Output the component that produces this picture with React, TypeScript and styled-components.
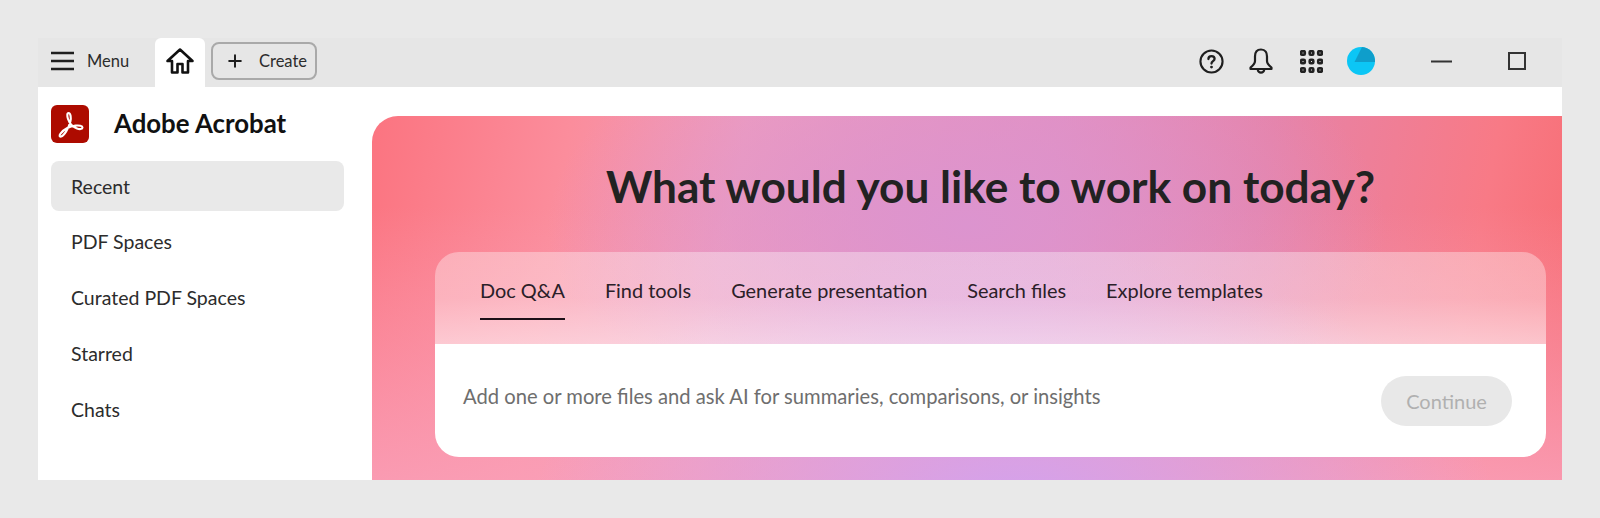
import React from "react";
import styled, { createGlobalStyle } from "styled-components";
import { Plus } from "lucide-react";

const GlobalStyle = createGlobalStyle`
  html, body {
    margin: 0;
    height: 518px;
    overflow: hidden;
    background: #e9e9e9;
    font-family: Lato, "Open Sans", "Liberation Sans", sans-serif;
    color: #222;
  }
  * { box-sizing: border-box; }
`;

const Page = styled.div`
  padding: 38px;
  height: 518px;
`;

const Window = styled.div`
  height: 442px;
  display: flex;
  flex-direction: column;
  background: #fff;
  overflow: hidden;
`;

const TopBar = styled.header`
  height: 49px;
  flex: none;
  background: #e6e6e6;
  display: flex;
  align-items: center;
  padding: 0 0 3px 13px;
`;

const MenuButton = styled.div`
  display: flex;
  align-items: center;
  gap: 13px;
  width: 104px;
  font-size: 16.5px;
  color: #2c2c2c;
`;

const HomeTab = styled.div`
  width: 50px;
  height: 49px;
  margin-bottom: -3px;
  padding-bottom: 3px;
  background: #fff;
  border-radius: 6px 6px 0 0;
  display: flex;
  align-items: center;
  justify-content: center;
`;

const CreateButton = styled.div`
  margin-left: 6px;
  width: 106px;
  height: 38px;
  border: 2px solid #a9a9a9;
  border-radius: 8px;
  display: flex;
  align-items: center;
  gap: 14px;
  padding-left: 12px;
  font-size: 16.5px;
  color: #2c2c2c;
`;

const TopActions = styled.div`
  margin-left: auto;
  display: flex;
  align-items: center;
  padding-right: 25px;
`;

const ActionSlot = styled.div<{ $width: number }>`
  width: ${(p) => p.$width}px;
  display: flex;
  justify-content: center;
  align-items: center;
`;

const Body = styled.div`
  flex: 1;
  display: flex;
  min-height: 0;
`;

const Sidebar = styled.aside`
  width: 334px;
  flex: none;
  padding: 18px 28px 0 13px;
`;

const Brand = styled.div`
  display: flex;
  align-items: center;
  gap: 25px;
  height: 38px;
  margin-bottom: 18px;
`;

const BrandName = styled.div`
  font-size: 25.8px;
  font-weight: 700;
  color: #111;
  padding-bottom: 3px;
`;

const NavItem = styled.div<{ $active?: boolean }>`
  height: 50px;
  margin-bottom: 5.75px;
  border-radius: 8px;
  padding-left: 20px;
  display: flex;
  align-items: center;
  font-size: 19.5px;
  color: #2c2c2c;
  background: ${(p) => (p.$active ? "#e9e9e9" : "transparent")};
`;

const Hero = styled.main`
  flex: 1;
  margin-top: 29px;
  border-top-left-radius: 26px;
  padding: 0 16px 0 63px;
  background:
    radial-gradient(ellipse 480px 260px at 54% 108%, #d2a2ee 0%, rgba(210, 162, 238, 0) 100%),
    radial-gradient(ellipse 420px 220px at 50% 30%, #dc94cf 0%, rgba(220, 148, 207, 0) 100%),
    linear-gradient(180deg, rgba(250, 160, 185, 0) 25%, rgba(250, 160, 185, 0.85) 100%),
    linear-gradient(100deg, #fb7480 0%, #fb8d9c 16%, #ee9cbe 30%, #e38fbf 55%, #e683a8 72%, #f87a86 90%, #f76c72 100%);
  display: flex;
  flex-direction: column;
`;

const Title = styled.h1`
  margin: 0;
  height: 136px;
  padding-top: 40px;
  text-align: center;
  font-size: 44.2px;
  line-height: 60px;
  font-weight: 700;
  color: #222;
`;

const Card = styled.section`
  height: 205px;
  border-radius: 24px;
  overflow: hidden;
  display: flex;
  flex-direction: column;
`;

const TabRow = styled.div`
  height: 92px;
  flex: none;
  padding: 24px 0 0 45px;
  display: flex;
  gap: 40px;
  background: linear-gradient(180deg, rgba(255, 255, 255, 0.35) 0%, rgba(255, 255, 255, 0.35) 50%, rgba(255, 255, 255, 0.52) 100%);
`;

const Tab = styled.div<{ $active?: boolean }>`
  height: 44px;
  font-size: 19.9px;
  line-height: 28px;
  color: #2a2028;
  border-bottom: 2px solid ${(p) => (p.$active ? "#1d1018" : "transparent")};
`;

const InputRow = styled.div`
  flex: 1;
  background: #fff;
  display: flex;
  align-items: center;
  justify-content: space-between;
  padding: 0 34px 0 28px;
`;

const Prompt = styled.div`
  font-size: 20.2px;
  color: #6e6e6e;
  margin-bottom: 10px;
`;

const ContinueButton = styled.div`
  width: 131px;
  height: 50px;
  border-radius: 25px;
  background: #e8e8e8;
  color: #b0b0b0;
  font-size: 20px;
  display: flex;
  align-items: center;
  justify-content: center;
`;

const tabs = ["Doc Q&A", "Find tools", "Generate presentation", "Search files", "Explore templates"];
const navItems = ["Recent", "PDF Spaces", "Curated PDF Spaces", "Starred", "Chats"];

const HamburgerIcon = () => (
  <svg width="23" height="20" viewBox="0 0 23 20" stroke="#1f1f1f" strokeWidth="2.600">
    <path d="M0 2h23M0 10h23M0 18h23" />
  </svg>
);

const HomeIcon = () => (
  <svg width="30" height="28" viewBox="0 0 30 28" fill="none" stroke="#111" strokeWidth="2.600" strokeLinejoin="round">
    <path d="M15 2.500 2.500 14H7v11.500h5.500V17h5v8.500H23V14h4.500z" />
  </svg>
);

const AcrobatLogo = () => (
  <svg width="38" height="38" viewBox="0 0 38 38">
    <rect width="38" height="38" rx="6" fill="#ad0b00" />
    <path
      d="M17.500 8c-1.500 0-1.500 3-.5 6 1.500 4.500 5 8 9 9.500 2.500 1 5.500.8 5.500-1 0-1.800-3.500-2.300-7-1.900-5.500.6-11.500 3.500-15 8-1.500 2-1 3.500.6 3 3-1 7.500-8 9.300-15 .8-3.500.4-8.600-1.900-8.600z"
      fill="none"
      stroke="#fff"
      strokeWidth="2.100"
      strokeLinejoin="round"
    />
  </svg>
);

const HelpIcon = () => (
  <svg width="25" height="25" viewBox="0 0 26 26" fill="none">
    <circle cx="13" cy="13" r="11.500" stroke="#1f1f1f" strokeWidth="2.200" />
    <path d="M9.800 10.400c0-1.900 1.400-3 3.200-3s3.200 1.100 3.200 2.800c0 2.500-3.200 2.500-3.200 5" stroke="#1f1f1f" strokeWidth="2.400" strokeLinecap="round" />
    <circle cx="13" cy="18.800" r="1.500" fill="#1f1f1f" />
  </svg>
);

const BellIcon = () => (
  <svg width="24" height="27" viewBox="0 0 24 27" fill="none" stroke="#1f1f1f" strokeWidth="2.200" strokeLinejoin="round">
    <path d="M12 1.500C7.500 1.500 6 5 6 8.500V13c0 3-2 4.500-4.500 6.500V21h21v-1.500C20 17.500 18 16 18 13V8.500C18 5 16.500 1.500 12 1.500z" />
    <path d="M8.800 21.500a3.200 3.200 0 0 0 6.400 0" />
  </svg>
);

const AppsIcon = () => (
  <svg width="23" height="23" viewBox="0 0 23 23" fill="none" stroke="#222" strokeWidth="2.600">
    {[3, 11.500, 20].map((y) =>
      [3, 11.500, 20].map((x) => <rect key={`${x}-${y}`} x={x - 1.800} y={y - 1.800} width="3.600" height="3.600" rx="1" />)
    )}
  </svg>
);

const Avatar = () => (
  <svg width="28" height="28" viewBox="0 0 28 28">
    <circle cx="14" cy="14" r="14" fill="#0cc6f5" />
    <path d="M15 0A14 14 0 0 1 28 15H7.500z" fill="#0f9ecb" />
  </svg>
);

const MinimizeIcon = () => (
  <svg width="21" height="3" viewBox="0 0 21 3" stroke="#333" strokeWidth="2">
    <path d="M0 1.500h21" />
  </svg>
);

const MaximizeIcon = () => (
  <svg width="18" height="18" viewBox="0 0 18 18" fill="none" stroke="#333" strokeWidth="2">
    <rect x="1" y="1" width="16" height="16" />
  </svg>
);

export default function App() {
  return (
    <Page>
      <GlobalStyle />
      <Window>
        <TopBar>
          <MenuButton>
            <HamburgerIcon />
            Menu
          </MenuButton>
          <HomeTab>
            <HomeIcon />
          </HomeTab>
          <CreateButton>
            <Plus size={20} strokeWidth={2.400} color="#1f1f1f" />
            Create
          </CreateButton>
          <TopActions>
            <ActionSlot $width={50}><HelpIcon /></ActionSlot>
            <ActionSlot $width={50}><BellIcon /></ActionSlot>
            <ActionSlot $width={50}><AppsIcon /></ActionSlot>
            <ActionSlot $width={50}><Avatar /></ActionSlot>
            <ActionSlot $width={110}><MinimizeIcon /></ActionSlot>
            <ActionSlot $width={41}><MaximizeIcon /></ActionSlot>
          </TopActions>
        </TopBar>
        <Body>
          <Sidebar>
            <Brand>
              <AcrobatLogo />
              <BrandName>Adobe Acrobat</BrandName>
            </Brand>
            {navItems.map((item, i) => (
              <NavItem key={item} $active={i === 0}>{item}</NavItem>
            ))}
          </Sidebar>
          <Hero>
            <Title>What would you like to work on today?</Title>
            <Card>
              <TabRow>
                {tabs.map((tab, i) => (
                  <Tab key={tab} $active={i === 0}>{tab}</Tab>
                ))}
              </TabRow>
              <InputRow>
                <Prompt>Add one or more files and ask AI for summaries, comparisons, or insights</Prompt>
                <ContinueButton>Continue</ContinueButton>
              </InputRow>
            </Card>
          </Hero>
        </Body>
      </Window>
    </Page>
  );
}
